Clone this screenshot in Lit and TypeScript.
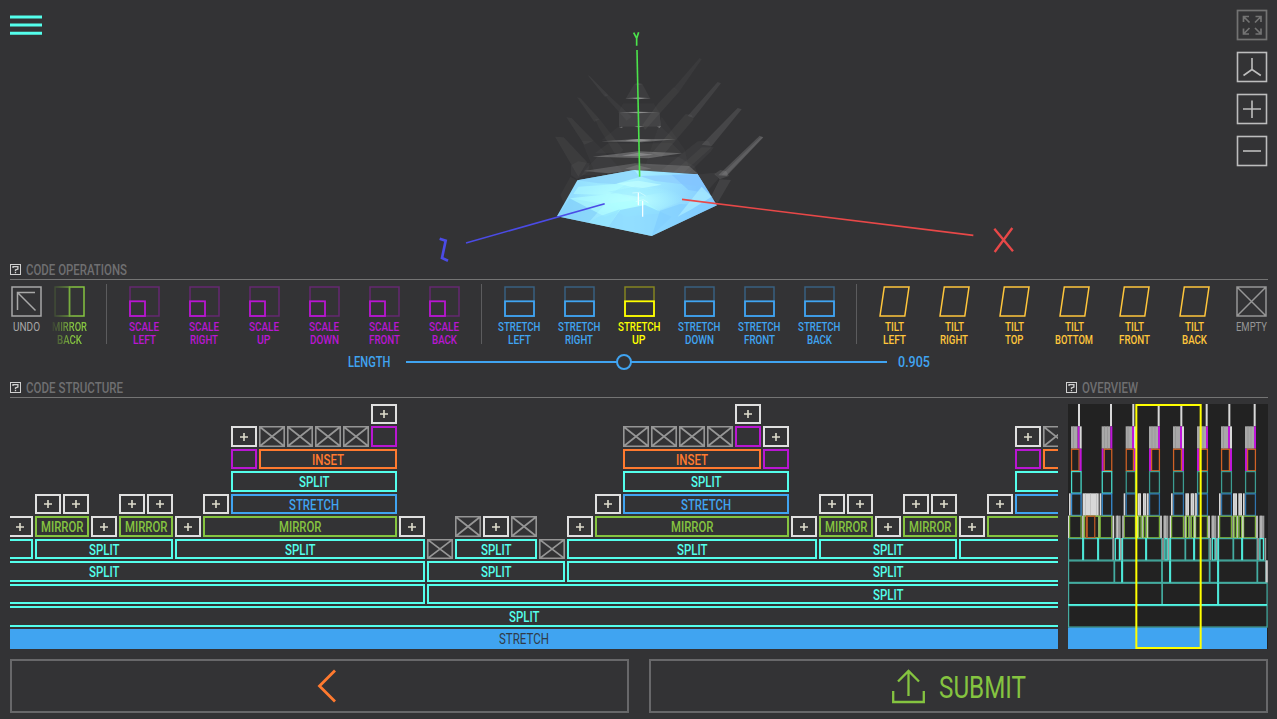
import { LitElement, html, svg, css } from "lit";
import { customElement, property } from "lit/decorators.js";

/* Condensed caption: the text is set to an exact advance width. */
@customElement("fit-label")
class FitLabel extends LitElement {
  @property() text = "";
  @property({ type: Number }) w = 30;
  @property({ type: Number }) size = 12;
  @property({ type: Number }) weight = 400;
  static styles = css`
    :host { display: block; line-height: 0; }
    svg { display: block; overflow: visible; }
    text { fill: currentColor; font-family: Roboto, "Liberation Sans", sans-serif; }
  `;
  render() {
    const h = Math.round(this.size * 1.08);
    return html`<svg width=${this.w} height=${h}>
      <text x="0" y=${h / 2 + this.size * 0.3555} textLength=${this.w} lengthAdjust="spacingAndGlyphs"
        font-size=${this.size} font-weight=${this.weight}>${this.text}</text></svg>`;
  }
}

const smallWidths: Record<string, number> = {
  SCALE: 30, LEFT: 23, RIGHT: 28, UP: 13.5, DOWN: 29, FRONT: 31, BACK: 25, STRETCH: 42.5,
  TILT: 19, TOP: 18.5, BOTTOM: 38, UNDO: 27, EMPTY: 31, MIRROR: 35,
};
const blockWidths: Record<string, number> = { SPLIT: 30.5, INSET: 32, STRETCH: 50, MIRROR: 42.5 };

const glyphs: Record<string, unknown> = {
  undo: svg`<rect x="1" y="1" width="29" height="29"/><path d="M6.5 24V6.5H24M6.5 6.5L24.5 24.5"/>`,
  mirror: svg`<path d="M1 1H15.5V30H1Z" opacity=".8"/><path d="M15.5 1H30V30H15.5Z"/>`,
  scale: svg`<rect x="1" y="1" width="29" height="29" opacity=".38"/><rect class="bold" x="1" y="15.3" width="15" height="14.7"/>`,
  stretch: svg`<rect x="1" y="1" width="29" height="29" opacity=".4"/><rect class="bold" x="1" y="15.3" width="29" height="14.7"/>`,
  tilt: svg`<path d="M5.3 1H30L25.8 30H1Z"/>`,
  empty: svg`<path d="M1 1H30V30H1ZM1 1L30 30M30 1L1 30"/>`,
};

@customElement("op-button")
class OpButton extends LitElement {
  @property() kind = "scale";
  @property() line1 = "";
  @property() line2 = "";
  static styles = css`
    :host { display: flex; flex-direction: column; align-items: center; }
    svg { display: block; fill: none; stroke: currentColor; stroke-width: 1.5; margin: 0 0 3px 0; }
    .bold { stroke-width: 1.8; }
  `;
  render() {
    const wt = this.kind === "undo" || this.kind === "empty" ? 400 : 500;
    return html`<svg width="31" height="31">${glyphs[this.kind]}</svg>
      <fit-label .text=${this.line1} .w=${smallWidths[this.line1]} .size=${12.2} .weight=${wt}></fit-label>
      ${this.line2 ? html`<fit-label .text=${this.line2} .w=${smallWidths[this.line2]} .size=${12.2} .weight=${wt}></fit-label>` : ""}`;
  }
}

@customElement("scene-view")
class SceneView extends LitElement {
  static styles = css`
    :host { display: block; }
    svg { display: block; }
    .ghost { fill: #c8c8c8; }
    .axis { fill: none; }
  `;
  render() {
    const ghosts: [string, number][] = [
      ["M128 76L134 78L190 135L180 141Z", .07],
      ["M178 132L190 135L260 200L245 212L190 150Z", .05],
      ["M96 142L106 144L164 208L148 216Z", .06],
      ["M150 206L164 208L235 300L215 320L160 230Z", .04],
      ["M64 202L80 204L146 272L118 284Z", .06],
      ["M110 272L146 272L240 370L150 370Z", .03],
      ["M30 260L56 262L126 336L100 380Z", .06],
      ["M78 346L100 334L134 340L130 366L96 388L78 376Z", .05],
      ["M46 435L76 380L98 392L60 470Z", .04],
      ["M464 24L470 28L402 126L386 114Z", .05],
      ["M386 112L402 126L300 240L292 225L340 160Z", .06],
      ["M518 96L528 100L446 204L428 198Z", .1],
      ["M422 192L440 194L446 208L350 320L320 310Z", .06],
      ["M578 174L590 178L500 288L470 284Z", .13],
      ["M458 274L490 272L500 292L380 400L350 360Z", .05],
      ["M470 292L506 292L498 304L400 400L370 380Z", .05],
      ["M644 257L655 262L545 378L520 376Z", .2],
      ["M648 260L655 262L545 374L530 374Z", .12],
      ["M508 372L526 360L544 364L552 378L524 388Z", .14],
      ["M524 388L558 390L518 458L498 440Z", .1],
      ["M450 374L510 368L520 386L490 420Z", .05],
      ["M268 102H292L316 146H242Z", .07],
      ["M268 102L280 100L292 102L280 104Z", .2],
      ["M222 188H344L348 230H222Z", .11],
      ["M234 160H326L344 188H220Z", .03],
      ["M220 230H348L390 270H170Z", .03],
      ["M190 280H380L410 310H150Z", .04],
      ["M350 200L420 300L430 348H300Z", .03],
      ["M158 320H400L450 350L460 376H110L120 360Z", .04],
      ["M240 145L280 142L318 145L280 148Z", .35],
      ["M262 145L280 143L300 145L280 147Z", .4],
      ["M218 187L280 185L346 187L280 190Z", .4],
      ["M250 187L280 185L312 187L280 190Z", .35],
      ["M268 230L280 228L298 230L280 232Z", .5],
      ["M222 232L232 230V233ZM336 230L348 229L344 233Z", .5],
      ["M168 274L280 267L392 268L290 277Z", .35],
      ["M240 271L280 267L320 270L280 275Z", .4],
      ["M143 320L280 304L412 310L310 325Z", .32],
      ["M230 317L280 308L325 314L280 319Z", .35],
      ["M116 363L270 340L432 348L460 372L270 361L190 370Z", .22],
      ["M240 356L275 345L320 356L275 361Z", .2],
    ];
    return html`<svg width="1277" height="262" viewBox="0 0 1277 262">
      <defs>
        <linearGradient id="ice" x1="0" y1="0" x2="1" y2="0">
          <stop offset="0" stop-color="#8bd7ff"/><stop offset=".45" stop-color="#aaf4ff"/><stop offset="1" stop-color="#82c9ff"/>
        </linearGradient>
        <radialGradient id="glow"><stop offset="0" stop-color="#c2ffff" stop-opacity=".9"/><stop offset="1" stop-color="#b0ffff" stop-opacity="0"/></radialGradient>
      </defs>
      <g transform="translate(545 50) scale(.33333)">
        ${ghosts.map(([d, o]) => svg`<path class="ghost" d=${d} fill-opacity=${o}/>`)}
        <path d="M97 391L268 360L458 373L516 466L320 558L36 499Z" fill="url(#ice)"/>
        <path d="M97 391L268 360L284 381L210 402L160 400Z" fill="#8bd2fb" opacity=".7"/>
        <path d="M284 378L458 373L480 410L330 393Z" fill="#8dcdff" opacity=".75"/>
        <path d="M380 374L458 373L494 430L430 420Z" fill="#7dc0ff" opacity=".6"/>
        <path d="M80 430L180 404L400 410L420 450L290 500L130 480Z" fill="url(#glow)"/>
        <path d="M100 410L250 400L190 435L85 432Z" fill="#b6ffff" opacity=".5"/>
        <path d="M36 499L74 445L180 463L130 518Z" fill="#83cff9" opacity=".65"/>
        <path d="M74 445L220 430L285 460L180 500Z" fill="#b2ffff" opacity=".6"/>
        <path d="M180 463L290 448L350 490L240 500Z" fill="#aaffff" opacity=".4"/>
        <path d="M225 480L300 465L380 500L320 558L190 530Z" fill="#86d3ff" opacity=".65"/>
        <path d="M160 500L225 478L190 530L130 518Z" fill="#91e3ff" opacity=".7"/>
        <path d="M320 558L345 482L405 462L516 466Z" fill="#80ccff" opacity=".65"/>
        <path d="M398 500L470 410L500 440L440 478Z" fill="#a9edff" opacity=".7"/>
        <path d="M215 400L280 392L350 404L280 416Z" fill="#c2ffff" opacity=".65"/>
        <path d="M190 425L270 410L360 425L280 440Z" fill="#9de9ff" opacity=".5"/>
        <path d="M280 428V466M293 452V500" stroke="#fff" stroke-width="3.5"/>
        <path d="M262 429L284 427L302 438M272 455L295 449L310 458" fill="none" stroke="#d9ffff" stroke-width="2"/>
      </g>
      <g class="axis" transform="translate(430 20) scale(.33333)">
        <path d="M621 90L629 470" stroke="#4be34b" stroke-width="4.8"/>
        <path d="M611 38L620 55L626 37M620 55V77" stroke="#4be34b" stroke-width="5"/>
        <path d="M756 538L1630 646" stroke="#e84848" stroke-width="4.8"/>
        <path d="M1693 626L1749 694M1747 624L1694 696" stroke="#e84848" stroke-width="7"/>
        <path d="M108 669L524 551" stroke="#4b4be6" stroke-width="4.8"/>
        <path d="M29 656L47 662L36 714L54 722" stroke="#4b4be6" stroke-width="8"/>
      </g>
    </svg>`;
  }
}

/* [row, first column, column span, kind, caption]; column 0 sits at the left edge of the visible strip */
type Block = [number, number, number, string, string?];
const blocks: Block[] = [
  [11, -9, 55, "root", "STRETCH"],
  [10, -9, 55, "split", "SPLIT"],
  [9, -9, 24, "split"], [9, 15, 33, "split", "SPLIT"],
  [8, -8, 23, "split", "SPLIT"], [8, 15, 5, "split", "SPLIT"], [8, 20, 23, "split", "SPLIT"],
  [7, -4, 5, "split"], [7, 1, 5, "split", "SPLIT"], [7, 6, 9, "split", "SPLIT"], [7, 15, 1, "x"],
  [7, 16, 3, "split", "SPLIT"], [7, 19, 1, "x"], [7, 20, 9, "split", "SPLIT"], [7, 29, 5, "split", "SPLIT"], [7, 34, 9, "split"],
  [6, 0, 1, "add"], [6, 1, 2, "mirror", "MIRROR"], [6, 3, 1, "add"], [6, 4, 2, "mirror", "MIRROR"], [6, 6, 1, "add"],
  [6, 7, 7, "mirror", "MIRROR"], [6, 14, 1, "add"], [6, 16, 1, "x"], [6, 17, 1, "add"], [6, 18, 1, "x"], [6, 20, 1, "add"],
  [6, 21, 7, "mirror", "MIRROR"], [6, 28, 1, "add"], [6, 29, 2, "mirror", "MIRROR"], [6, 31, 1, "add"],
  [6, 32, 2, "mirror", "MIRROR"], [6, 34, 1, "add"], [6, 35, 7, "mirror"],
  [5, 1, 1, "add"], [5, 2, 1, "add"], [5, 4, 1, "add"], [5, 5, 1, "add"], [5, 7, 1, "add"], [5, 8, 6, "stretch", "STRETCH"],
  [5, 21, 1, "add"], [5, 22, 6, "stretch", "STRETCH"], [5, 29, 1, "add"], [5, 30, 1, "add"], [5, 32, 1, "add"], [5, 33, 1, "add"],
  [5, 35, 1, "add"], [5, 36, 6, "stretch"],
  [4, 8, 6, "split", "SPLIT"], [4, 22, 6, "split", "SPLIT"], [4, 36, 6, "split"],
  [3, 8, 1, "scale"], [3, 9, 5, "inset", "INSET"], [3, 22, 5, "inset", "INSET"], [3, 27, 1, "scale"], [3, 36, 1, "scale"], [3, 37, 5, "inset"],
  [2, 8, 1, "add"], [2, 9, 1, "x"], [2, 10, 1, "x"], [2, 11, 1, "x"], [2, 12, 1, "x"], [2, 13, 1, "scale"],
  [2, 22, 1, "x"], [2, 23, 1, "x"], [2, 24, 1, "x"], [2, 25, 1, "x"], [2, 26, 1, "scale"], [2, 27, 1, "add"],
  [2, 36, 1, "add"], [2, 37, 1, "x"],
  [1, 13, 1, "add"], [1, 26, 1, "add"],
];

@customElement("code-structure")
class CodeStructure extends LitElement {
  static styles = css`
    :host { display: block; overflow: hidden; height: 245px; }
    .grid {
      display: grid; gap: 2px; margin-left: -255px; width: max-content;
      grid-template-columns: repeat(57, 26px);
      grid-template-rows: 20px 21px 20px 21px 20px 21px 20px 21px 20px 21px 20px;
    }
    .b { box-sizing: border-box; border: 2px solid currentColor; display: flex; align-items: center; justify-content: center; min-width: 0; }
    .odd { padding-top: 1.5px; }
    .split { color: #54ffec; }
    .mirror { color: #85c440; }
    .stretch { color: #40a4f1; }
    .inset { color: #ff7a2f; }
    .scale { color: #b916d2; }
    .add { color: #e0e0e0; }
    .x { border: 0; padding: 0; color: #969696; }
    .root { border: 0; padding: 0; background: #40a4f1; color: #303b48; }
    svg { display: block; fill: none; stroke: currentColor; }
  `;
  render() {
    return html`<div class="grid">${blocks.map(([r, c, s, k, t]) => html`
      <div class="b ${t && r % 2 ? "odd" : ""} ${k}" style="grid-row:${r};grid-column:${c + 10}/span ${s}">
        ${k === "add" ? html`<svg width="8" height="8"><path d="M4 0V8M0 4H8" stroke="#dedccc" stroke-width="1.6"/></svg>` : ""}
        ${k === "x" ? html`<svg width="26" height=${r % 2 ? 20 : 21} viewBox="0 0 26 21" preserveAspectRatio="none"><path d="M.75 .75H25.25V20.25H.75ZM1 1L25 20M25 1L1 20" stroke-width="1.7"/></svg>` : ""}
        ${t ? html`<fit-label .text=${t} .w=${blockWidths[t]} .size=${14.6} .weight=${k === "root" ? 400 : 500}></fit-label>` : ""}
      </div>`)}</div>`;
  }
}

/* Overview map, three map units to a pixel. */
const towers = [[63, 95, 0], [155, 187, 1], [227, 258, 0], [297, 330, 1], [369, 402, 0], [441, 474, 1], [513, 546, 0], [585, 618, 1]];

@customElement("code-overview")
class CodeOverview extends LitElement {
  static styles = css`
    :host { display: block; height: 245px; background: #222; }
    svg { display: block; }
  `;
  render() {
    const top = (r: number) => 67 * (r - 1);
    const fill = (r: number, a: number, b: number, c: string) =>
      svg`<rect x=${a} y=${top(r)} width=${b - a} height="67" fill=${c}/>`;
    const box = (r: number, a: number, b: number, c: string) =>
      svg`<rect x=${a + 1.75} y=${top(r) + 1.75} width=${b - a - 3.5} height="64.5" fill="none" stroke=${c} stroke-width="3.8"/>`;
    const bar = (r: number, x: number, c: string, w = 5) =>
      svg`<rect x=${x - w / 2} y=${top(r)} width=${w} height="67" fill=${c}/>`;
    const teal = "#44aca1", bright = "#50f5e4", white = "#d8d8d8", grey = "#9d9d9d", purple = "#c016da";
    return html`<svg width="200" height="245" viewBox="54 0 600 735">
      ${towers.map(([a, b, even], i) => {
        const blue = i < 2 ? "#3890d6" : "#2f75ae";
        return svg`
          ${bar(1, even ? b - 4 : b - 8, white, 6)}
          ${even
            ? svg`${fill(2, a, b - 6, "#a8a8a8")}${fill(2, b - 6, b, purple)}${bar(2, a + 9, "#909090", 2)}${bar(2, a + 18, "#949494", 2)}
                ${fill(3, a, a + 6, purple)}${box(3, a + 6, b, "#d06226")}`
            : svg`${fill(2, a, b - 12, "#a8a8a8")}${fill(2, b - 12, b - 6, purple)}${fill(2, b - 6, b, white)}${bar(2, a + 7, "#909090", 2)}
                ${box(3, a, b - 6, "#d06226")}${fill(3, b - 6, b, purple)}`}
          ${box(4, a, b, i < 2 ? "#48dccd" : "#3c9c92")}
          ${fill(5, a - 6, a - 1, white)}${box(5, a, b, blue)}
          ${box(6, a - 6, b, "#7aae3a")}
          ${even ? svg`${bar(6, b + 3, white)}${fill(6, b + 10, b + 25, "#999")}${bar(6, b + 15, "#ccc", 3)}`
            : svg`${bar(6, b + 4, white)}`}
          ${bar(6, a - 8, white, 4)}`;
      })}
      ${fill(5, 98, 146, white)}${[106, 122, 139].map((x) => bar(5, x, "#b8b8b8", 2))}
      ${[[263, 273], [279, 289], [406, 417], [422, 433], [435, 440], [549, 561], [565, 576]].map(([a, b]) => svg`${fill(5, a, b, white)}${bar(5, (a + b) / 2, "#b8b8b8", 2)}`)}
      ${box(6, 101, 149, "#85c440")}${fill(6, 107, 113, "#bc5923")}${box(6, 109, 136, "#bc5923")}
      ${[[264, 275], [279, 291], [407, 418], [422, 433], [550, 561], [565, 577]].map(([a, b]) => svg`${box(6, a, b, "#85c440")}${bar(6, b + 2, white, 3)}`)}
      ${[[54, 99], [99, 144], [144, 189], [216, 288], [288, 335], [360, 405], [405, 432], [432, 477], [504, 549], [549, 576], [576, 621]].map(([a, b]) => box(7, a, b + 2, teal))}
      ${[99, 144, 216, 288, 360, 432, 504, 576].map((x) => bar(7, x, bright))}
      ${[190, 212, 339, 355, 481, 499, 624, 646].map((x) => bar(7, x, grey))}
      ${[[194, 210], [343, 353], [485, 497], [628, 642]].map(([a, b]) => box(7, a, b, bright))}
      ${[[54, 192], [192, 216], [216, 335], [335, 360], [360, 478], [478, 504], [504, 621], [621, 648]].map(([a, b]) => box(8, a, b + 2, teal))}
      ${[216, 360, 504].map((x) => bar(8, x, bright))}${bar(8, 650, "#ccc", 7)}
      ${box(9, 54, 338, teal)}${box(9, 335, 506, teal)}${box(9, 504, 653, teal)}${bar(9, 504, bright)}
      ${box(10, 54, 653, teal)}
      <rect x="54" y="600" width="597" height="5" fill="#50f5e4"/>
      <rect x="54" y="671" width="597" height="64" fill="#40a4f1"/>
      <rect x="259" y="3" width="193" height="729" fill="none" stroke="#ff0" stroke-width="6"/>
    </svg>`;
  }
}

@customElement("app-root")
class AppRoot extends LitElement {
  static styles = css`
    :host {
      display: flex; flex-direction: column; box-sizing: border-box; width: 1277px; height: 719px; overflow: hidden;
      background: #333335; font-family: Roboto, "Liberation Sans", sans-serif;
    }
    svg { display: block; fill: none; stroke: currentColor; }
    .stage { position: relative; height: 262px; flex: none; }
    .menu { position: absolute; left: 10px; top: 14px; color: #54ffec; }
    .tools { position: absolute; right: 9px; top: 9px; display: flex; flex-direction: column; gap: 10px; color: #bdbdbd; }
    .dim { color: #737373; }
    .heads { display: flex; height: 17px; margin: 0 9px 0 10px; border-bottom: 1px solid #747474; flex: none; }
    .head { display: flex; align-items: center; gap: 5px; color: #6f6f71; width: 1056px; height: 16px; flex: none; }
    .head:nth-child(2) { width: 200px; }
    .head svg { color: #d0d0d0; }
    .ops { box-sizing: border-box; display: flex; align-items: flex-start; padding: 6px 0 0 10px; height: 71px; flex: none; }
    .undo { color: #a8a8a8; width: 32px; }
    .undo-mirror { width: 57px; margin-left: -1px; color: #85c440; -webkit-mask-image: linear-gradient(90deg, transparent 9px, #000 32px); mask-image: linear-gradient(90deg, transparent 9px, #000 32px); }
    .sep { width: 1px; height: 60px; margin: -2px 7px 0; background: #5c5c5e; }
    .sep.first { margin-left: 8px; }
    .op { width: 60px; }
    .c-scale { color: #b916d2; }
    .c-stretch { color: #40a4f1; }
    .c-tilt { color: #ffc63c; }
    .on { color: #ff0; }
    .empty { color: #969696; width: 31px; margin-left: 12px; }
    .slider { display: flex; align-items: center; height: 22px; padding-left: 347.5px; color: #40a4f1; margin-bottom: 7px; flex: none; }
    .slider svg { margin: 0 11px 0 16px; }
    .work { display: flex; gap: 10px; margin-top: 6px; padding-left: 10px; flex: none; }
    code-structure { width: 1048px; }
    code-overview { width: 200px; }
    .actions { display: flex; gap: 20px; padding: 10px 9px 6px 10px; flex: none; }
    .action { box-sizing: border-box; width: 619px; height: 54px; border: 2px solid #68686a; display: flex; align-items: center; justify-content: center; gap: 14px; }
    .back { color: #ff7a2f; padding-left: 14px; }
    .submit { color: #85c440; }
  `;

  private head(text: string, w: number) {
    return html`<div class="head">
      <svg width="11" height="12"><rect x=".5" y=".5" width="10" height="10" stroke-width="1"/><path d="M3 4V2.7H7.9V5L5.5 6V7.2M5.5 8V9.3" stroke-width="1.3"/></svg>
      <fit-label .text=${text} .w=${w} .size=${14.8} .weight=${500}></fit-label></div>`;
  }

  private group(kind: string, sides: string[], active = "") {
    return sides.map((s) => html`<op-button class="op c-${kind} ${s === active ? "on" : ""}" .kind=${kind} .line1=${kind.toUpperCase()} .line2=${s}></op-button>`);
  }

  render() {
    const sides = ["LEFT", "RIGHT", "UP", "DOWN", "FRONT", "BACK"];
    return html`
      <div class="stage">
        <scene-view></scene-view>
        <svg class="menu" width="32" height="22"><path d="M0 3H32M0 11H32M0 19.3H32" stroke-width="3"/></svg>
        <div class="tools">
          <svg class="dim" width="32" height="32" stroke-width="1.7"><rect x="1.5" y="1.5" width="29" height="29"/><path d="M7.5 13V7.5H13M7.5 7.5L13.5 13.5M19.5 7.5H25V13M25 7.5L19 13.5M7.5 19.5V25H13M7.5 25L13.5 19M25 19.5V25H19.5M25 25L19 19"/></svg>
          <svg width="32" height="32" stroke-width="1.6"><rect x="1.5" y="1.5" width="29" height="29"/><path d="M16 7V18.5L7.5 24.5M16 18.5L24.8 24.5"/></svg>
          <svg width="32" height="32" stroke-width="1.6"><rect x="1.5" y="1.5" width="29" height="29"/><path d="M16 7.5V25M7 16H25"/></svg>
          <svg width="32" height="32" stroke-width="1.6"><rect x="1.5" y="1.5" width="29" height="29"/><path d="M7 16H25"/></svg>
        </div>
      </div>
      <div class="heads">${this.head("CODE OPERATIONS", 101)}</div>
      <div class="ops">
        <op-button class="undo" .kind=${"undo"} .line1=${"UNDO"}></op-button>
        <op-button class="undo-mirror" .kind=${"mirror"} .line1=${"MIRROR"} .line2=${"BACK"}></op-button>
        <div class="sep first"></div>
        ${this.group("scale", sides)}
        <div class="sep"></div>
        ${this.group("stretch", sides, "UP")}
        <div class="sep"></div>
        ${this.group("tilt", ["LEFT", "RIGHT", "TOP", "BOTTOM", "FRONT", "BACK"])}
        <op-button class="empty" .kind=${"empty"} .line1=${"EMPTY"}></op-button>
      </div>
      <div class="slider">
        <fit-label .text=${"LENGTH"} .w=${42.5} .size=${14.6} .weight=${500}></fit-label>
        <svg width="481" height="18"><path d="M0 9H211M225 9H481" stroke-width="2"/><circle cx="218" cy="9" r="7" stroke-width="2"/></svg>
        <fit-label .text=${"0.905"} .w=${32} .size=${14.6} .weight=${500}></fit-label>
      </div>
      <div class="heads">${this.head("CODE STRUCTURE", 97)}${this.head("OVERVIEW", 56)}</div>
      <div class="work"><code-structure></code-structure><code-overview></code-overview></div>
      <div class="actions">
        <div class="action back"><svg width="20" height="34"><path d="M18 1.5L2.5 17L18 32.5" stroke-width="2.8"/></svg></div>
        <div class="action submit">
          <svg width="33" height="36" stroke-width="2.3"><path d="M16.5 3V28M6 13.5L16.5 3L27 13.5M1.2 23V34H31.8V23"/></svg>
          <fit-label .text=${"SUBMIT"} .w=${87} .size=${31} .weight=${400}></fit-label>
        </div>
      </div>`;
  }
}
